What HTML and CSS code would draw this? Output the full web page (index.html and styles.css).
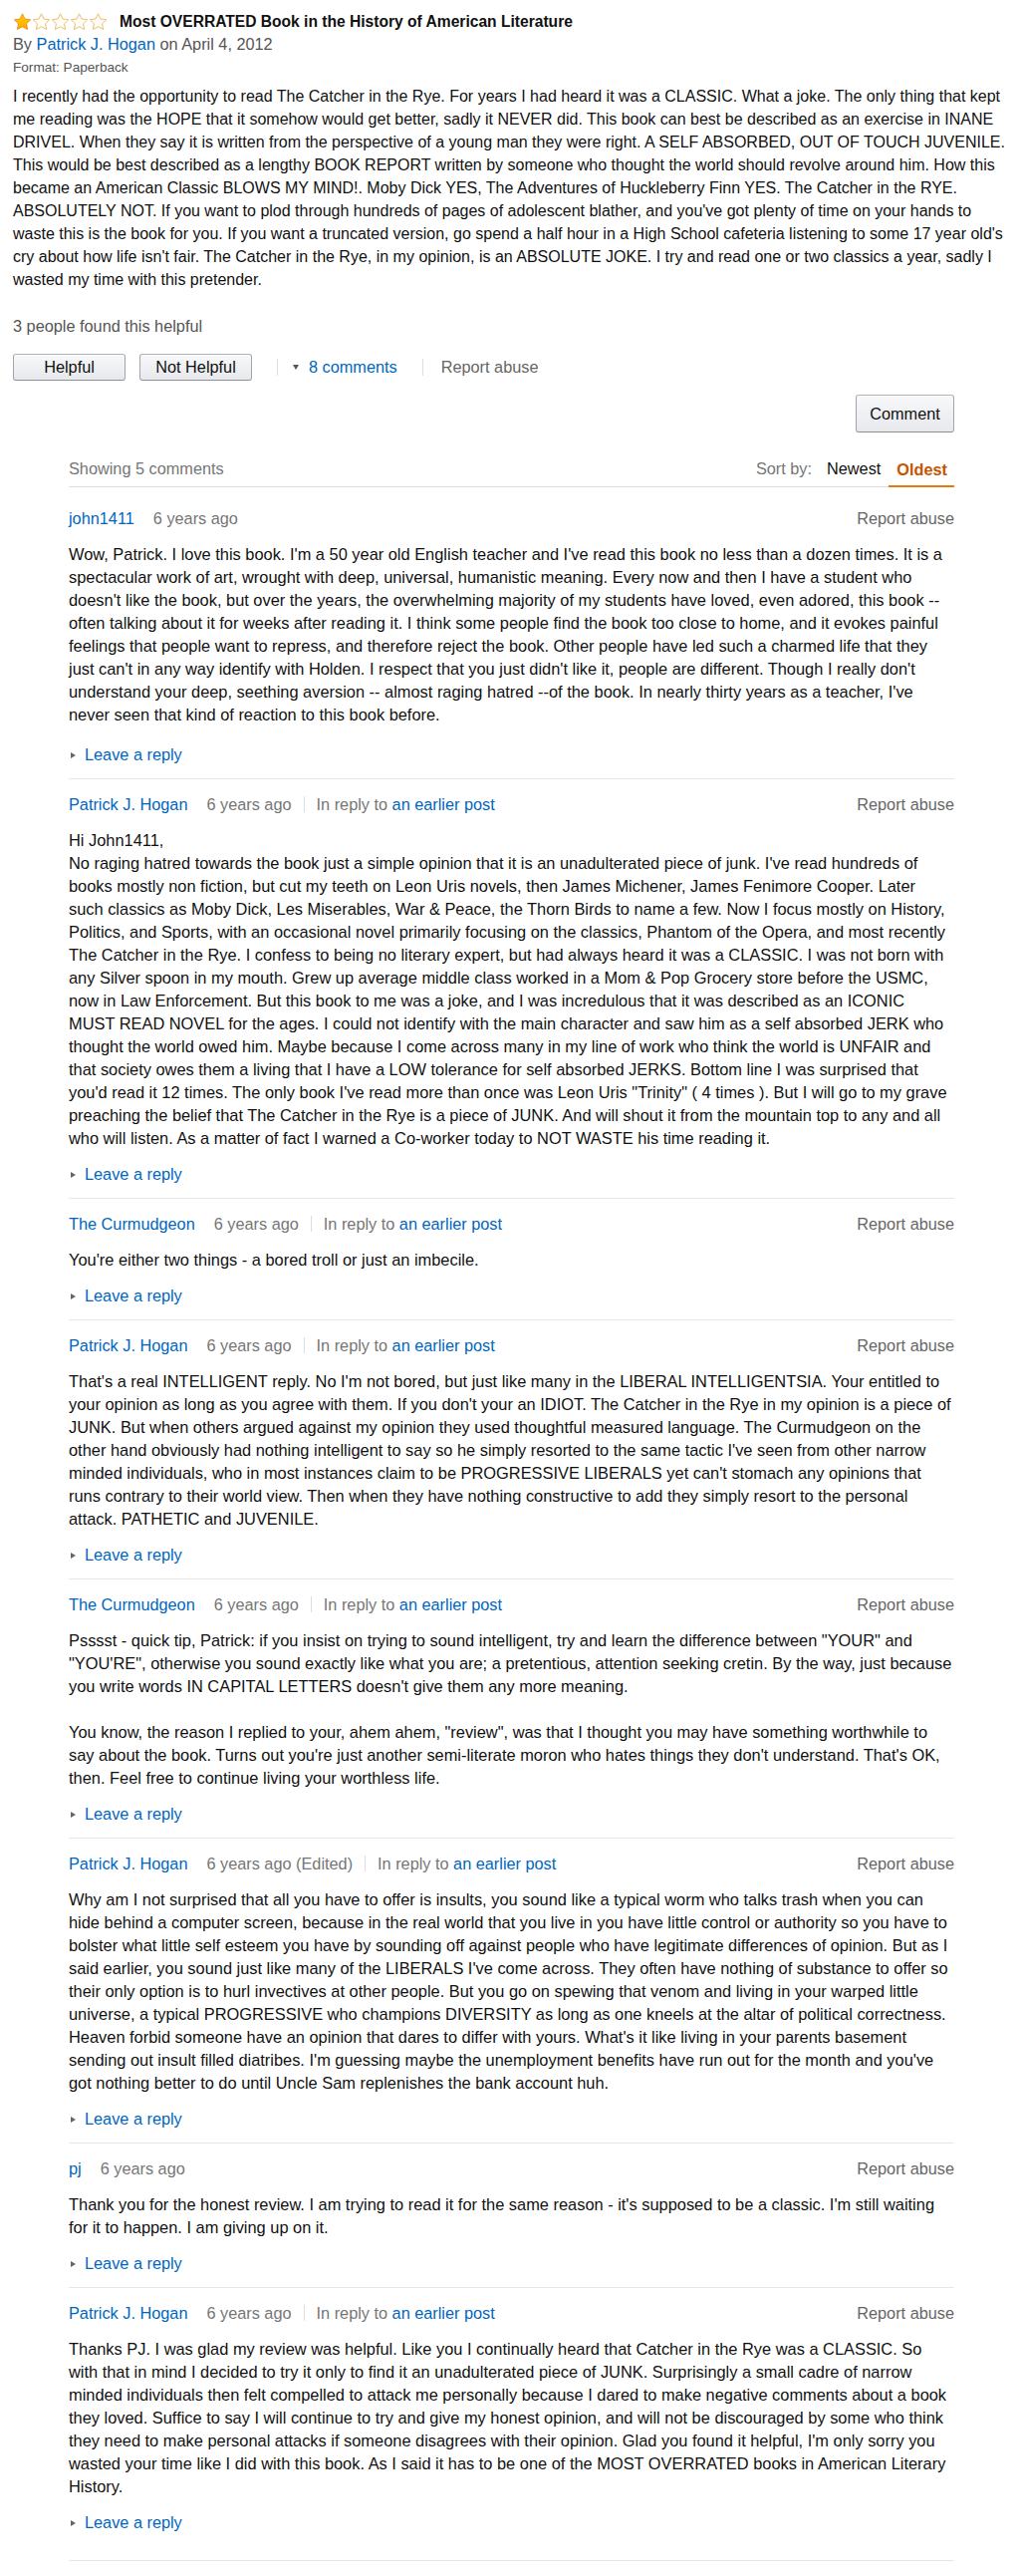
FILE: index.html
```html
<!DOCTYPE html>
<html lang="en">
  <head>
    <meta charset="UTF-8" />
    <meta name="viewport" content="width=device-width, initial-scale=1.0" />
    <title>Most OVERRATED Book in the History of American Literature</title>
    <link rel="stylesheet" href="styles.css">
  </head>
  <body>
    <div class="review">
      <div class="review-title">
        <svg class="stars" viewBox="0 0 95 17" aria-label="1.0 out of 5 stars">
          <defs>
            <path id="star" d="M9 0.8l2.5 5.2 5.7 0.8-4.1 4 1 5.7L9 13.8l-5.1 2.7 1-5.7-4.1-4 5.7-0.8z" />
            <linearGradient id="gold" x1="0" y1="0" x2="0" y2="1">
              <stop offset="0" stop-color="#ffce00" />
              <stop offset="1" stop-color="#ffa700" />
            </linearGradient>
          </defs>
          <use href="#star" x="0.5" class="star-full" />
          <use href="#star" x="19.5" class="star-empty" />
          <use href="#star" x="38.5" class="star-empty" />
          <use href="#star" x="57.5" class="star-empty" />
          <use href="#star" x="76.5" class="star-empty" />
        </svg>
        <h3>Most OVERRATED Book in the History of American Literature</h3>
      </div>
      <div class="byline">By <a href="#" class="author">Patrick J. Hogan</a> on April 4, 2012</div>
      <div class="format">Format: Paperback</div>

      <p class="review-text">I recently had the opportunity to read The Catcher in the Rye. For years I had heard it was a CLASSIC. What a joke. The only thing that kept me reading was the HOPE that it somehow would get better, sadly it NEVER did. This book can best be described as an exercise in INANE DRIVEL. When they say it is written from the perspective of a young man they were right. A SELF ABSORBED, OUT OF TOUCH JUVENILE. This would be best described as a lengthy BOOK REPORT written by someone who thought the world should revolve around him. How this became an American Classic BLOWS MY MIND!. Moby Dick YES, The Adventures of Huckleberry Finn YES. The Catcher in the RYE. ABSOLUTELY NOT. If you want to plod through hundreds of pages of adolescent blather, and you've got plenty of time on your hands to waste this is the book for you. If you want a truncated version, go spend a half hour in a High School cafeteria listening to some 17 year old's cry about how life isn't fair. The Catcher in the Rye, in my opinion, is an ABSOLUTE JOKE. I try and read one or two classics a year, sadly I wasted my time with this pretender.</p>

      <div class="helpful-count">3 people found this helpful</div>

      <div class="actions">
        <button class="btn">Helpful</button>
        <button class="btn">Not Helpful</button>
        <span class="divider"></span>
        <span class="caret-down"></span>
        <a href="#">8 comments</a>
        <span class="divider"></span>
        <span class="muted-link">Report abuse</span>
      </div>
    </div>

    <div class="discussion">
      <div class="comment-bar">
        <button class="btn btn-comment">Comment</button>
      </div>

      <div class="sort-bar">
        <span class="showing">Showing 5 comments</span>
        <div class="sort">
          <span class="sort-label">Sort by:</span>
          <span class="tab">Newest</span>
          <span class="tab active">Oldest</span>
        </div>
      </div>

      <div class="comment first">
        <div class="comment-head">
          <a href="#" class="name">john1411</a>
          <span class="age">6 years ago</span>
          <span class="report">Report abuse</span>
        </div>
        <div class="comment-body">Wow, Patrick. I love this book. I'm a 50 year old English teacher and I've read this book no less than a dozen times. It is a spectacular work of art, wrought with deep, universal, humanistic meaning. Every now and then I have a student who doesn't like the book, but over the years, the overwhelming majority of my students have loved, even adored, this book -- often talking about it for weeks after reading it. I think some people find the book too close to home, and it evokes painful feelings that people want to repress, and therefore reject the book. Other people have led such a charmed life that they just can't in any way identify with Holden. I respect that you just didn't like it, people are different. Though I really don't understand your deep, seething aversion -- almost raging hatred --of the book. In nearly thirty years as a teacher, I've never seen that kind of reaction to this book before.</div>
        <div class="leave-reply"><span class="caret-right"></span><a href="#">Leave a reply</a></div>
      </div>

      <div class="comment">
        <div class="comment-head">
          <a href="#" class="name">Patrick J. Hogan</a>
          <span class="age">6 years ago</span>
          <span class="reply-to">In reply to <a href="#">an earlier post</a></span>
          <span class="report">Report abuse</span>
        </div>
        <div class="comment-body">Hi John1411,<br>No raging hatred towards the book just a simple opinion that it is an unadulterated piece of junk. I've read hundreds of books mostly non fiction, but cut my teeth on Leon Uris novels, then James Michener, James Fenimore Cooper. Later such classics as Moby Dick, Les Miserables, War &amp; Peace, the Thorn Birds to name a few. Now I focus mostly on History, Politics, and Sports, with an occasional novel primarily focusing on the classics, Phantom of the Opera, and most recently The Catcher in the Rye. I confess to being no literary expert, but had always heard it was a CLASSIC. I was not born with any Silver spoon in my mouth. Grew up average middle class worked in a Mom &amp; Pop Grocery store before the USMC, now in Law Enforcement. But this book to me was a joke, and I was incredulous that it was described as an ICONIC MUST READ NOVEL for the ages. I could not identify with the main character and saw him as a self absorbed JERK who thought the world owed him. Maybe because I come across many in my line of work who think the world is UNFAIR and that society owes them a living that I have a LOW tolerance for self absorbed JERKS. Bottom line I was surprised that you'd read it 12 times. The only book I've read more than once was Leon Uris "Trinity" ( 4 times ). But I will go to my grave preaching the belief that The Catcher in the Rye is a piece of JUNK. And will shout it from the mountain top to any and all who will listen. As a matter of fact I warned a Co-worker today to NOT WASTE his time reading it.</div>
        <div class="leave-reply"><span class="caret-right"></span><a href="#">Leave a reply</a></div>
      </div>

      <div class="comment">
        <div class="comment-head">
          <a href="#" class="name">The Curmudgeon</a>
          <span class="age">6 years ago</span>
          <span class="reply-to">In reply to <a href="#">an earlier post</a></span>
          <span class="report">Report abuse</span>
        </div>
        <div class="comment-body">You're either two things - a bored troll or just an imbecile.</div>
        <div class="leave-reply"><span class="caret-right"></span><a href="#">Leave a reply</a></div>
      </div>

      <div class="comment">
        <div class="comment-head">
          <a href="#" class="name">Patrick J. Hogan</a>
          <span class="age">6 years ago</span>
          <span class="reply-to">In reply to <a href="#">an earlier post</a></span>
          <span class="report">Report abuse</span>
        </div>
        <div class="comment-body">That's a real INTELLIGENT reply. No I'm not bored, but just like many in the LIBERAL INTELLIGENTSIA. Your entitled to your opinion as long as you agree with them. If you don't your an IDIOT. The Catcher in the Rye in my opinion is a piece of JUNK. But when others argued against my opinion they used thoughtful measured language. The Curmudgeon on the other hand obviously had nothing intelligent to say so he simply resorted to the same tactic I've seen from other narrow minded individuals, who in most instances claim to be PROGRESSIVE LIBERALS yet can't stomach any opinions that runs contrary to their world view. Then when they have nothing constructive to add they simply resort to the personal attack. PATHETIC and JUVENILE.</div>
        <div class="leave-reply"><span class="caret-right"></span><a href="#">Leave a reply</a></div>
      </div>

      <div class="comment">
        <div class="comment-head">
          <a href="#" class="name">The Curmudgeon</a>
          <span class="age">6 years ago</span>
          <span class="reply-to">In reply to <a href="#">an earlier post</a></span>
          <span class="report">Report abuse</span>
        </div>
        <div class="comment-body">Psssst - quick tip, Patrick: if you insist on trying to sound intelligent, try and learn the difference between "YOUR" and "YOU'RE", otherwise you sound exactly like what you are; a pretentious, attention seeking cretin. By the way, just because you write words IN CAPITAL LETTERS doesn't give them any more meaning.<br><br>You know, the reason I replied to your, ahem ahem, "review", was that I thought you may have something worthwhile to say about the book. Turns out you're just another semi-literate moron who hates things they don't understand. That's OK, then. Feel free to continue living your worthless life.</div>
        <div class="leave-reply"><span class="caret-right"></span><a href="#">Leave a reply</a></div>
      </div>

      <div class="comment">
        <div class="comment-head">
          <a href="#" class="name">Patrick J. Hogan</a>
          <span class="age">6 years ago (Edited)</span>
          <span class="reply-to">In reply to <a href="#">an earlier post</a></span>
          <span class="report">Report abuse</span>
        </div>
        <div class="comment-body">Why am I not surprised that all you have to offer is insults, you sound like a typical worm who talks trash when you can hide behind a computer screen, because in the real world that you live in you have little control or authority so you have to bolster what little self esteem you have by sounding off against people who have legitimate differences of opinion. But as I said earlier, you sound just like many of the LIBERALS I've come across. They often have nothing of substance to offer so their only option is to hurl invectives at other people. But you go on spewing that venom and living in your warped little universe, a typical PROGRESSIVE who champions DIVERSITY as long as one kneels at the altar of political correctness. Heaven forbid someone have an opinion that dares to differ with yours. What's it like living in your parents basement sending out insult filled diatribes. I'm guessing maybe the unemployment benefits have run out for the month and you've got nothing better to do until Uncle Sam replenishes the bank account huh.</div>
        <div class="leave-reply"><span class="caret-right"></span><a href="#">Leave a reply</a></div>
      </div>

      <div class="comment">
        <div class="comment-head">
          <a href="#" class="name">pj</a>
          <span class="age">6 years ago</span>
          <span class="report">Report abuse</span>
        </div>
        <div class="comment-body">Thank you for the honest review. I am trying to read it for the same reason - it's supposed to be a classic. I'm still waiting for it to happen. I am giving up on it.</div>
        <div class="leave-reply"><span class="caret-right"></span><a href="#">Leave a reply</a></div>
      </div>

      <div class="comment last">
        <div class="comment-head">
          <a href="#" class="name">Patrick J. Hogan</a>
          <span class="age">6 years ago</span>
          <span class="reply-to">In reply to <a href="#">an earlier post</a></span>
          <span class="report">Report abuse</span>
        </div>
        <div class="comment-body">Thanks PJ. I was glad my review was helpful. Like you I continually heard that Catcher in the Rye was a CLASSIC. So with that in mind I decided to try it only to find it an unadulterated piece of JUNK. Surprisingly a small cadre of narrow minded individuals then felt compelled to attack me personally because I dared to make negative comments about a book they loved. Suffice to say I will continue to try and give my honest opinion, and will not be discouraged by some who think they need to make personal attacks if someone disagrees with their opinion. Glad you found it helpful, I'm only sorry you wasted your time like I did with this book. As I said it has to be one of the MOST OVERRATED books in American Literary History.</div>
        <div class="leave-reply"><span class="caret-right"></span><a href="#">Leave a reply</a></div>
      </div>
    </div>
  </body>
</html>
```

FILE: styles.css
```css
body {
  margin: 0;
  padding: 10px 13px 0;
  font-family: "Liberation Sans", Arial, sans-serif;
  font-size: 16.3px;
  line-height: 23px;
  color: #111;
  background-color: #fff;
}
a {
  color: #0066c0;
  text-decoration: none;
}

/* review header */
.review-title {
  display: flex;
  align-items: center;
}
.stars {
  width: 95px;
  height: 17px;
  margin-right: 12px;
  flex-shrink: 0;
}
.star-full {
  fill: url(#gold);
  stroke: #e5890d;
  stroke-width: 0.8;
}
.star-empty {
  fill: #fffdf6;
  stroke: #e9ae4a;
  stroke-width: 0.8;
}
.review-title h3 {
  margin: 0;
  font-size: 15.6px;
  font-weight: bold;
}
.byline {
  color: #555;
}
.format {
  font-size: 13.6px;
  color: #555;
}
.review-text {
  margin: 6px 0 0;
  font-size: 16px;
}
.helpful-count {
  margin-top: 24px;
  color: #555;
}

/* buttons + links row */
.actions {
  display: flex;
  align-items: center;
  margin-top: 16px;
}
.btn {
  box-sizing: border-box;
  width: 113px;
  height: 27px;
  padding: 0;
  border: 1px solid;
  border-color: #adb1b8 #a2a6ac #8d9096;
  border-radius: 3px;
  background: linear-gradient(to bottom, #f7f8fa, #e7e9ec);
  box-shadow: inset 0 1px 0 rgba(255, 255, 255, 0.6);
  font: inherit;
  color: #111;
  text-align: center;
}
.btn + .btn {
  margin-left: 14px;
}
.divider {
  width: 1px;
  height: 17px;
  background-color: #ddd;
  margin: 0 18px 0 25px;
}
.caret-down {
  width: 0;
  height: 0;
  border-left: 3.5px solid transparent;
  border-right: 3.5px solid transparent;
  border-top: 5px solid #555;
  margin: 0 10px 0 -3px;
}
.muted-link {
  color: #666;
}

/* discussion */
.discussion {
  margin: 14px 53px 0 56px;
}
.comment-bar {
  display: flex;
  justify-content: flex-end;
}
.btn-comment {
  width: 99px;
  height: 38px;
}
.sort-bar {
  display: flex;
  justify-content: space-between;
  align-items: flex-end;
  margin-top: 25px;
  border-bottom: 1px solid #ddd;
}
.showing {
  color: #767676;
  padding-bottom: 6px;
}
.sort {
  display: flex;
  align-items: flex-end;
}
.sort-label {
  color: #767676;
  padding: 0 7px 6px 0;
}
.tab {
  padding: 0 8px 6px;
}
.tab.active {
  color: #c45500;
  font-weight: bold;
  padding: 0 7px 4px 8px;
  border-bottom: 2px solid #e47911;
  margin-bottom: -1px;
}

.comment {
  padding: 14px 0 12px;
  border-bottom: 1px solid #e7e7e7;
}
.comment.first {
  padding-top: 20px;
}
.comment.last {
  padding-bottom: 26px;
}
.comment-head {
  display: flex;
  align-items: baseline;
}
.age {
  margin-left: 19px;
  color: #767676;
}
.reply-to {
  display: inline-block;
  line-height: 16px;
  margin-left: 12px;
  padding-left: 12px;
  border-left: 1px solid #ddd;
  color: #767676;
}
.report {
  margin-left: auto;
  color: #666;
}
.comment-body {
  margin-top: 13px;
  font-size: 16.4px;
}
.leave-reply {
  display: flex;
  align-items: center;
  margin-top: 13px;
}
.comment.first .leave-reply {
  margin-top: 17px;
}
.caret-right {
  width: 0;
  height: 0;
  border-top: 3.5px solid transparent;
  border-bottom: 3.5px solid transparent;
  border-left: 5px solid #666;
  margin: 0 9px 0 2px;
}
```
